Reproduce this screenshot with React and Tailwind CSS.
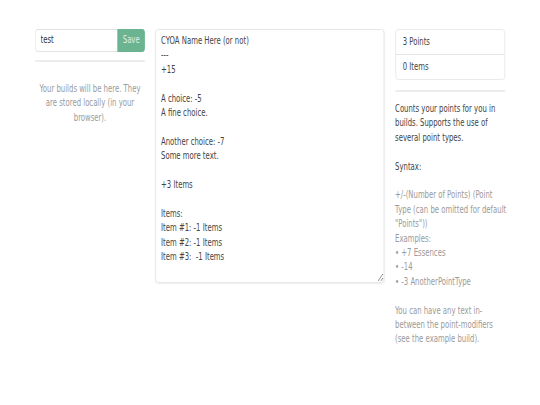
import React, { useState } from 'react';

const sample = `CYOA Name Here (or not)
---
+15

A choice: -5
A fine choice.

Another choice: -7
Some more text.

+3 Items

Items:
Item #1: -1 Items
Item #2: -1 Items
Item #3:  -1 Items`;

// The shot is squeezed across, so the page is laid out at 783px and scaled to 540px.
const App = () => {
  const [name, setName] = useState('test');
  const [text, setText] = useState(sample);

  return (
    <div className="w-[540px] h-[405px] overflow-hidden bg-white">
      <div
        className="w-[783px] h-[405px] origin-left scale-x-[0.69] text-[10px] leading-[14.4px] text-[#444]"
        style={{ fontFamily: '"DejaVu Sans", sans-serif' }}
      >
        <div className="grid grid-cols-[159.5px_332px_159.5px] gap-x-[15.2px] pt-[29px] pl-[50.7px]">
          {/* builds */}
          <div>
            <div className="flex h-[23px]">
              <input
                value={name}
                onChange={(e) => setName(e.target.value)}
                className="flex-1 min-w-0 border border-[#e2e2e2] border-r-0 rounded-l-[4px] px-[7px] text-[#333] outline-none"
              />
              <button className="w-[40px] bg-[#6bb391] text-[#dcefe5] rounded-r-[4px]">Save</button>
            </div>
            <hr className="mt-[8px] border-0 h-[2px] bg-[#ededed]" />
            <p className="mt-[20px] text-center text-[#9a9a9a] whitespace-nowrap">
              Your builds will be here. They<br />
              are stored locally (in your<br />
              browser).
            </p>
          </div>

          {/* editor */}
          <textarea
            value={text}
            onChange={(e) => setText(e.target.value)}
            className="h-[254px] border border-[#e2e2e2] rounded-[4px] px-[7px] py-[4px] text-[#444] outline-none resize-y shadow-[0_1px_2px_rgba(0,0,0,0.07)]"
          />

          {/* counts + help */}
          <div>
            <ul className="border border-[#e6e6e6] rounded-[4px]">
              <li className="h-[25px] flex items-center px-[10px] border-b border-[#e6e6e6]">3 Points</li>
              <li className="h-[24px] flex items-center px-[10px]">0 Items</li>
            </ul>
            <hr className="mt-[10px] border-0 h-[2px] bg-[#ededed]" />
            <div className="mt-[10px] whitespace-nowrap">
              <p>
                Counts your points for you in<br />
                builds. Supports the use of<br />
                several point types.
              </p>
              <p className="mt-[14.4px]">Syntax:</p>
              <div className="mt-[14.4px] text-[#9a9a9a]">
                <p>
                  +/-(Number of Points) (Point<br />
                  Type (can be omitted for default<br />
                  "Points"))
                </p>
                <p>Examples:</p>
                <p>• +7 Essences</p>
                <p>• -14</p>
                <p>• -3 AnotherPointType</p>
                <p className="mt-[14.4px]">
                  You can have any text in-<br />
                  between the point-modifiers<br />
                  (see the example build).
                </p>
              </div>
            </div>
          </div>
        </div>
      </div>
    </div>
  );
};

export default App;
